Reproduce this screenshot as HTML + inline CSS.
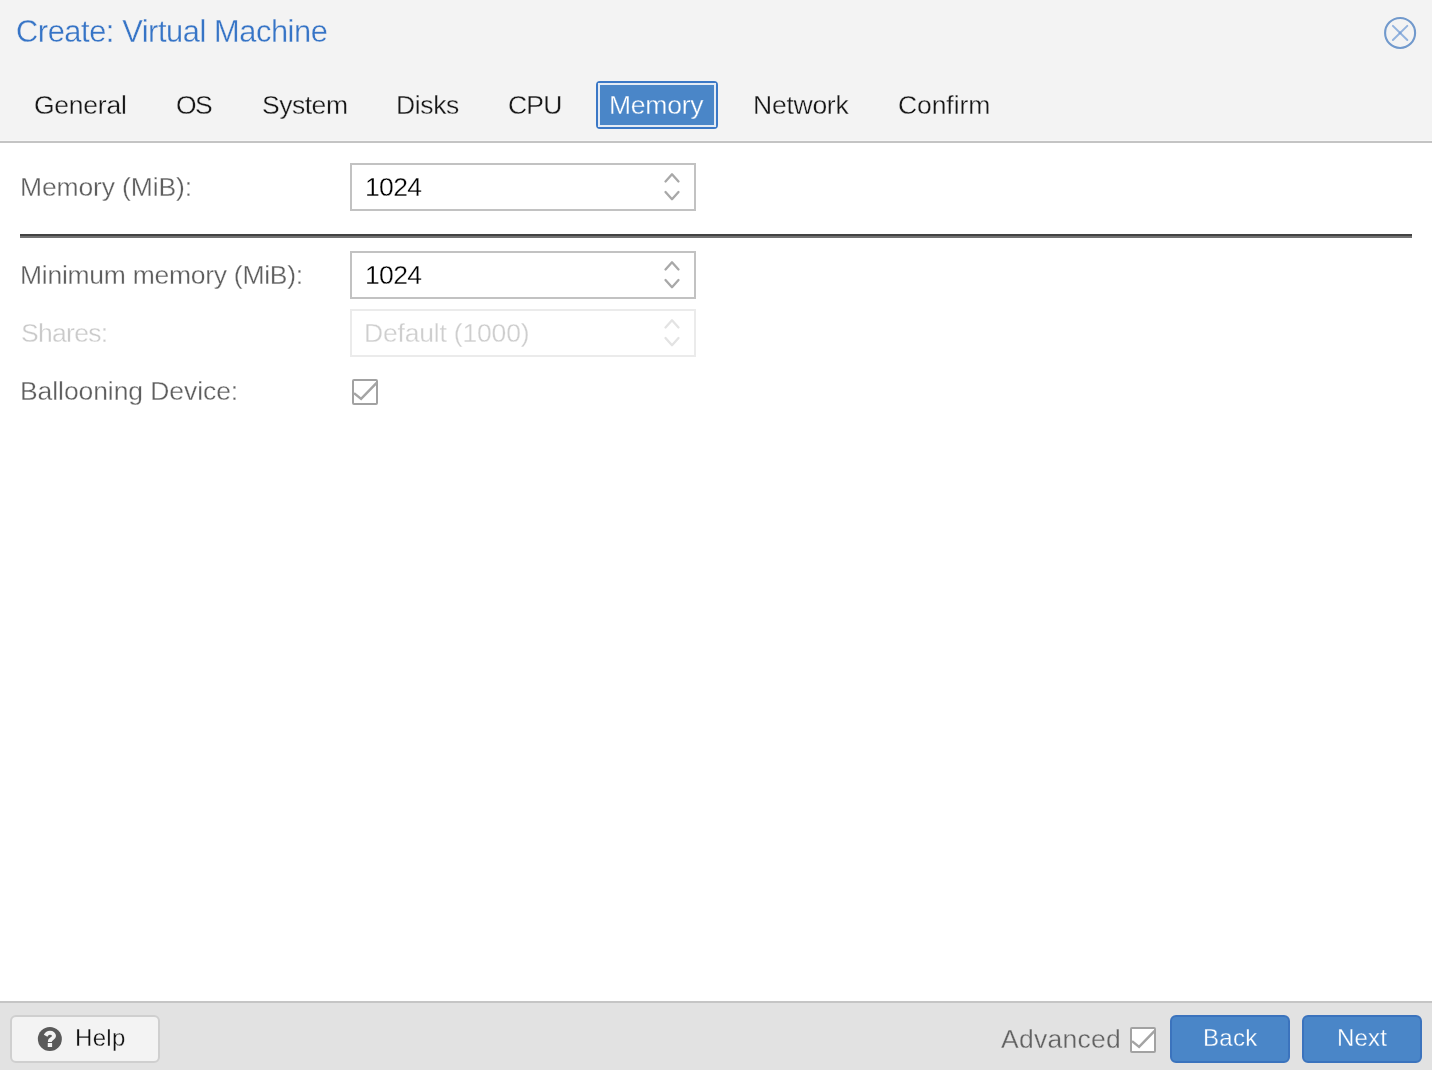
<!DOCTYPE html>
<html><head><meta charset="utf-8">
<style>
html,body{margin:0;padding:0;}
body{width:1432px;height:1070px;position:relative;overflow:hidden;background:#fff;font-family:"Liberation Sans",sans-serif;}
.a{position:absolute;white-space:nowrap;line-height:1;will-change:transform;}
.box{position:absolute;box-sizing:border-box;border:2px solid #c2c2c2;background:#fff;width:346px;height:48px;left:350px;}
.btn{position:absolute;box-sizing:border-box;height:48px;top:1015px;border-radius:6px;}
.blue{background:#4a86c8;border:2px solid #3b73bd;}
</style></head><body>
<div style="position:absolute;left:0;top:0;width:1432px;height:140px;background:#f3f3f3;"></div>
<div style="position:absolute;left:0;top:140px;width:1432px;height:1px;background:#f7f7f7;"></div>
<div style="position:absolute;left:0;top:141px;width:1432px;height:2px;background:#c4c4c4;"></div>
<svg style="position:absolute;left:1380px;top:12px;" width="40" height="40" viewBox="0 0 40 40"><circle cx="20.1" cy="20.95" r="15" fill="none" stroke="#7199cc" stroke-width="2.1"/><path d="M12.9 13.9L27.3 28.0M27.3 13.9L12.9 28.0" stroke="#93b3de" stroke-width="2" stroke-linecap="round" fill="none"/><circle cx="20.1" cy="20.95" r="1.4" fill="#7aa0d6"/></svg>
<div style="position:absolute;left:596px;top:81px;width:122px;height:48px;box-sizing:border-box;border:2px solid #3b78c6;border-radius:4px;background:#4a86c8;"><div style="position:absolute;left:0;top:0;right:0;bottom:0;border:2px solid #e3ebf5;"></div></div>
<div class="box" style="top:163px;"></div>
<svg style="position:absolute;left:660px;top:163px;" width="24" height="40" viewBox="0 0 24 40"><path d="M5.5 18.5L12 11.3L18.5 18.5M5.5 29L12 36.2L18.5 29" fill="none" stroke="#a8a8a8" stroke-width="2.3" stroke-linejoin="round" stroke-linecap="round"/></svg>
<div style="position:absolute;left:20px;top:234px;width:1392px;height:0;border-top:2px solid #434343;border-bottom:2px solid #727272;"></div>
<div class="box" style="top:251px;"></div>
<svg style="position:absolute;left:660px;top:251px;" width="24" height="40" viewBox="0 0 24 40"><path d="M5.5 18.5L12 11.3L18.5 18.5M5.5 29L12 36.2L18.5 29" fill="none" stroke="#a8a8a8" stroke-width="2.3" stroke-linejoin="round" stroke-linecap="round"/></svg>
<div class="box" style="top:309px;border-color:#ebebeb;"></div>
<svg style="position:absolute;left:660px;top:309px;" width="24" height="40" viewBox="0 0 24 40"><path d="M5.5 18.5L12 11.3L18.5 18.5M5.5 29L12 36.2L18.5 29" fill="none" stroke="#e3e3e3" stroke-width="2.3" stroke-linejoin="round" stroke-linecap="round"/></svg>
<svg style="position:absolute;left:352px;top:379px;" width="26" height="26" viewBox="0 0 26 26"><rect x="1" y="1" width="24" height="24" rx="1" fill="#fff" stroke="#a2a2a2" stroke-width="2"/><path d="M2.0 14.1L9.1 19.9L24.6 3.9" fill="none" stroke="#a4a4a4" stroke-width="2.5"/></svg>
<div style="position:absolute;left:0;top:1001px;width:1432px;height:69px;background:#e2e2e2;border-top:2px solid #c5c5c5;box-sizing:border-box;"></div>
<div class="btn" style="left:10px;width:150px;background:#f3f3f3;border:2px solid #cfcfcf;"></div>
<svg style="position:absolute;left:34px;top:1024px;" width="32" height="32" viewBox="0 0 32 32"><circle cx="15.85" cy="15" r="12" fill="#5a5a5a"/><path d="M11.6 11.7C12.6 9.8 14.0 8.8 15.9 8.8C18.4 8.8 20.0 10.3 20.0 12.0C20.0 14.6 15.9 15.0 15.9 17.0V18.0" fill="none" stroke="#f3f3f3" stroke-width="4"/><rect x="13.75" y="19" width="4.35" height="4" fill="#f3f3f3"/></svg>
<svg style="position:absolute;left:1130px;top:1027px;" width="26" height="26" viewBox="0 0 26 26"><rect x="1" y="1" width="24" height="24" rx="1" fill="#fff" stroke="#a2a2a2" stroke-width="2"/><path d="M2.0 14.1L9.1 19.9L24.6 3.9" fill="none" stroke="#a4a4a4" stroke-width="2.5"/></svg>
<div class="btn blue" style="left:1170px;width:120px;"></div>
<div class="btn blue" style="left:1302px;width:120px;"></div>
<div class="a" style="left:16.4px;top:17.4px;font-size:30.8px;letter-spacing:-0.427px;color:#3674c6;-webkit-text-stroke:0.3px #f3f3f3;">Create: Virtual Machine</div>
<div class="a" style="left:33.7px;top:92.2px;font-size:26.5px;letter-spacing:-0.25px;color:#161616;-webkit-text-stroke:0.3px #f3f3f3;">General</div>
<div class="a" style="left:175.7px;top:92.2px;font-size:26.5px;letter-spacing:-1.7px;color:#161616;-webkit-text-stroke:0.3px #f3f3f3;">OS</div>
<div class="a" style="left:261.7px;top:92.2px;font-size:26.5px;letter-spacing:-0.48px;color:#161616;-webkit-text-stroke:0.3px #f3f3f3;">System</div>
<div class="a" style="left:395.5px;top:92.2px;font-size:26.5px;letter-spacing:-0.35px;color:#161616;-webkit-text-stroke:0.3px #f3f3f3;">Disks</div>
<div class="a" style="left:507.6px;top:92.2px;font-size:26.5px;letter-spacing:-0.8px;color:#161616;-webkit-text-stroke:0.3px #f3f3f3;">CPU</div>
<div class="a" style="left:609.2px;top:92.2px;font-size:26.5px;letter-spacing:-0.24px;color:#ffffff;-webkit-text-stroke:0.3px #4a86c8;">Memory</div>
<div class="a" style="left:753.4px;top:92.2px;font-size:26.5px;letter-spacing:-0.25px;color:#161616;-webkit-text-stroke:0.3px #f3f3f3;">Network</div>
<div class="a" style="left:897.9px;top:92.2px;font-size:26.5px;letter-spacing:-0.083px;color:#161616;-webkit-text-stroke:0.3px #f3f3f3;">Confirm</div>
<div class="a" style="left:19.5px;top:174.0px;font-size:26.5px;letter-spacing:-0.142px;color:#5e5e5e;-webkit-text-stroke:0.3px #ffffff;">Memory (MiB):</div>
<div class="a" style="left:364.9px;top:174.0px;font-size:26.5px;letter-spacing:-0.633px;color:#000000;-webkit-text-stroke:0.3px #ffffff;">1024</div>
<div class="a" style="left:19.5px;top:262.1px;font-size:26.5px;letter-spacing:-0.27px;color:#5e5e5e;-webkit-text-stroke:0.3px #ffffff;">Minimum memory (MiB):</div>
<div class="a" style="left:364.9px;top:262.0px;font-size:26.5px;letter-spacing:-0.633px;color:#000000;-webkit-text-stroke:0.3px #ffffff;">1024</div>
<div class="a" style="left:20.5px;top:320.0px;font-size:26.5px;letter-spacing:-0.7px;color:#cacaca;-webkit-text-stroke:0.3px #ffffff;">Shares:</div>
<div class="a" style="left:363.9px;top:319.9px;font-size:26.5px;letter-spacing:-0.185px;color:#cecece;-webkit-text-stroke:0.3px #ffffff;">Default (1000)</div>
<div class="a" style="left:19.5px;top:377.9px;font-size:26.5px;letter-spacing:-0.076px;color:#5e5e5e;-webkit-text-stroke:0.3px #ffffff;">Ballooning Device:</div>
<div class="a" style="left:75.3px;top:1025.8px;font-size:24px;letter-spacing:0.3px;color:#111111;-webkit-text-stroke:0.3px #f3f3f3;">Help</div>
<div class="a" style="left:1000.7px;top:1025.8px;font-size:26.5px;letter-spacing:0.257px;color:#616161;-webkit-text-stroke:0.3px #e2e2e2;">Advanced</div>
<div class="a" style="left:1202.5px;top:1025.9px;font-size:24px;letter-spacing:0.3px;color:#ffffff;-webkit-text-stroke:0.3px #4a86c8;">Back</div>
<div class="a" style="left:1336.6px;top:1025.8px;font-size:24px;letter-spacing:0.2px;color:#ffffff;-webkit-text-stroke:0.3px #4a86c8;">Next</div>
</body></html>
